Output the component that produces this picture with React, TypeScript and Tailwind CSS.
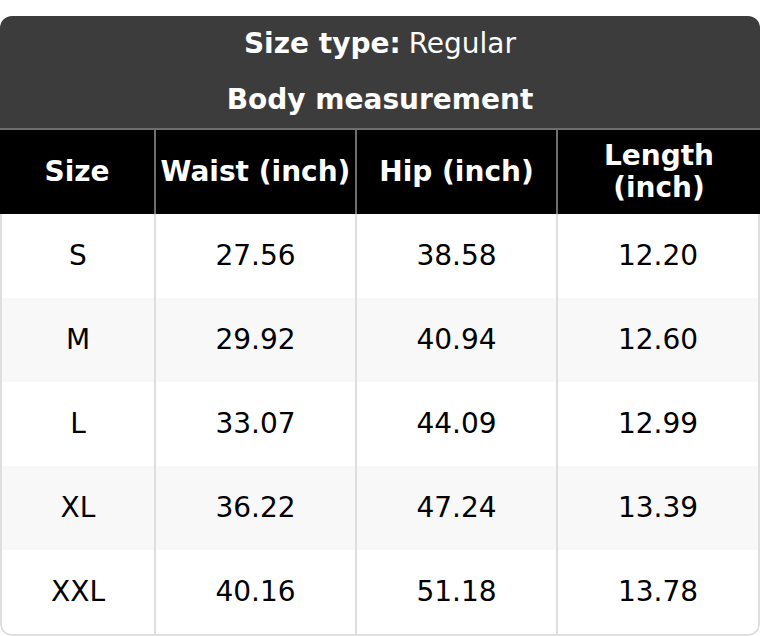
import React from "react";

const rows = [
  ["S", "27.56", "38.58", "12.20"],
  ["M", "29.92", "40.94", "12.60"],
  ["L", "33.07", "44.09", "12.99"],
  ["XL", "36.22", "47.24", "13.39"],
  ["XXL", "40.16", "51.18", "13.78"],
];

const SizeChart: React.FC = () => {
  return (
    <div className="w-[760px] h-[636px] bg-white pt-4 font-['DejaVu_Sans',sans-serif]">
      <div className="rounded-xl overflow-hidden">
        {/* Title */}
        <div className="bg-[#3c3c3c] text-white text-[28px] text-center border-b-2 border-[#6e6e6e]">
          <div className="h-14 flex items-center justify-center">
            <span className="font-bold">Size type:</span>
            <span className="ml-2">Regular</span>
          </div>
          <div className="h-14 flex items-center justify-center font-bold">
            Body measurement
          </div>
        </div>

        <table className="w-full border-collapse table-fixed text-[28px] leading-[32px]">
          <colgroup>
            <col className="w-[155px]" />
            <col className="w-[201px]" />
            <col className="w-[201px]" />
            <col />
          </colgroup>
          <thead>
            <tr className="bg-black text-white h-[84px]">
              <th className="font-bold px-1">Size</th>
              <th className="font-bold px-1 border-l-2 border-[#6e6e6e]">Waist (inch)</th>
              <th className="font-bold px-1 border-l-2 border-[#6e6e6e]">Hip (inch)</th>
              <th className="font-bold px-8 border-l-2 border-[#6e6e6e]">Length (inch)</th>
            </tr>
          </thead>
        </table>

        <div className="border-x-2 border-b-2 border-[#dedede] rounded-b-xl overflow-hidden">
          <table className="w-full border-collapse table-fixed text-[28px] text-black">
            <colgroup>
              <col className="w-[153px]" />
              <col className="w-[201px]" />
              <col className="w-[201px]" />
              <col />
            </colgroup>
            <tbody>
              {rows.map((r, i) => (
                <tr
                  key={r[0]}
                  className={`h-[84px] ${i % 2 === 1 ? "bg-[#f8f8f8]" : "bg-white"}`}
                >
                  {r.map((c, j) => (
                    <td
                      key={j}
                      className={`text-center ${j > 0 ? "border-l-2 border-[#dedede]" : ""}`}
                    >
                      {c}
                    </td>
                  ))}
                </tr>
              ))}
            </tbody>
          </table>
        </div>
      </div>
    </div>
  );
};

export default function App() {
  return <SizeChart />;
}
